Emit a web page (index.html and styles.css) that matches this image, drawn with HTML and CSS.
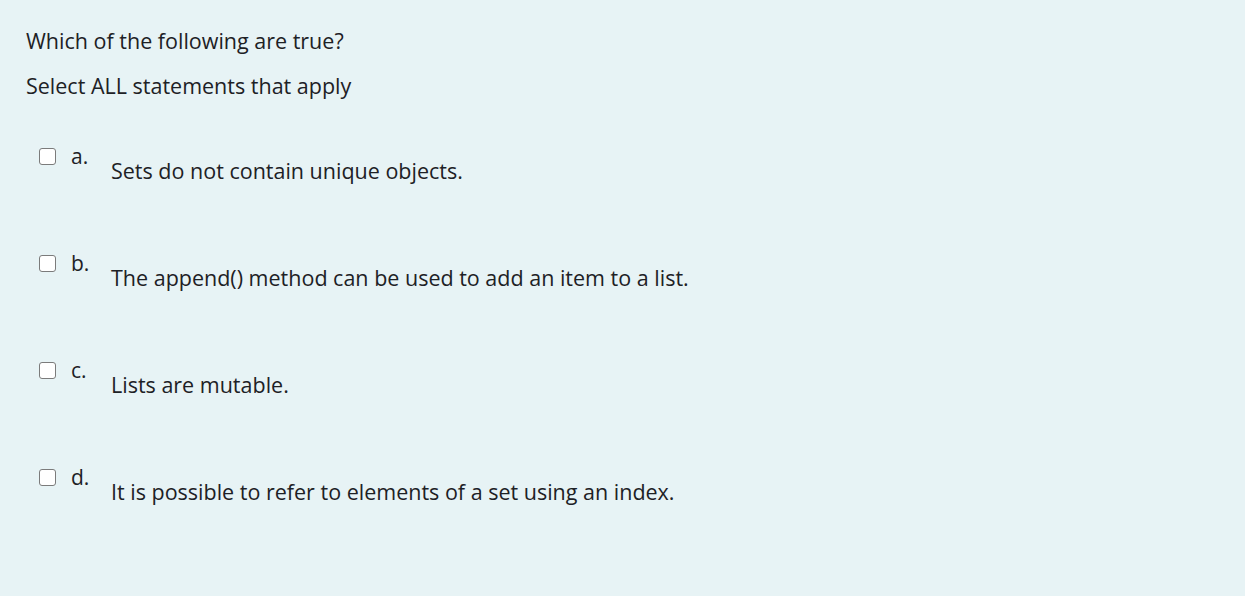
FILE: index.html
```html
<!DOCTYPE html>
<html>
<head>
<meta charset="utf-8">
<link rel="stylesheet" href="styles.css">
</head>
<body>
<div class="panel">
  <p class="qtext">Which of the following are true?</p>
  <p class="prompt">Select ALL statements that apply</p>
  <div class="answers">
    <div class="option">
      <span class="box"></span>
      <span class="letter">a.</span>
      <span class="text">Sets do not contain unique objects.</span>
    </div>
    <div class="option">
      <span class="box"></span>
      <span class="letter">b.</span>
      <span class="text">The append() method can be used to add an item to a list.</span>
    </div>
    <div class="option">
      <span class="box"></span>
      <span class="letter">c.</span>
      <span class="text">Lists are mutable.</span>
    </div>
    <div class="option">
      <span class="box"></span>
      <span class="letter">d.</span>
      <span class="text">It is possible to refer to elements of a set using an index.</span>
    </div>
  </div>
</div>
</body>
</html>
```
FILE: styles.css
```css
html, body {
  margin: 0;
  padding: 0;
  background: #ffffff;
}
body {
  font-family: "Open Sans", "Noto Sans", sans-serif;
  color: #1d2125;
}
.panel {
  width: 1245px;
  height: 596px;
  box-sizing: border-box;
  background: #e7f3f5;
  padding: 26px 0 0 26px;
}
.qtext {
  margin: 0;
  font-size: 21.5px;
  line-height: 30px;
}
.prompt {
  margin: 15px 0 0 0;
  font-size: 21.5px;
  line-height: 30px;
}
.answers {
  margin-top: 44px;
  display: flex;
  flex-direction: column;
  gap: 77px;
}
.option {
  display: flex;
  align-items: flex-start;
  height: 30px;
}
.box {
  width: 17px;
  height: 17px;
  box-sizing: border-box;
  border: 1.5px solid #7b7b7b;
  border-radius: 3px;
  background: #fff;
  margin: 3px 0 0 13px;
  flex: none;
}
.letter {
  width: 40px;
  margin-left: 15px;
  font-size: 21px;
  line-height: 22px;
  flex: none;
}
.text {
  font-size: 21.5px;
  line-height: 30px;
  margin-top: 11px;
}
```
